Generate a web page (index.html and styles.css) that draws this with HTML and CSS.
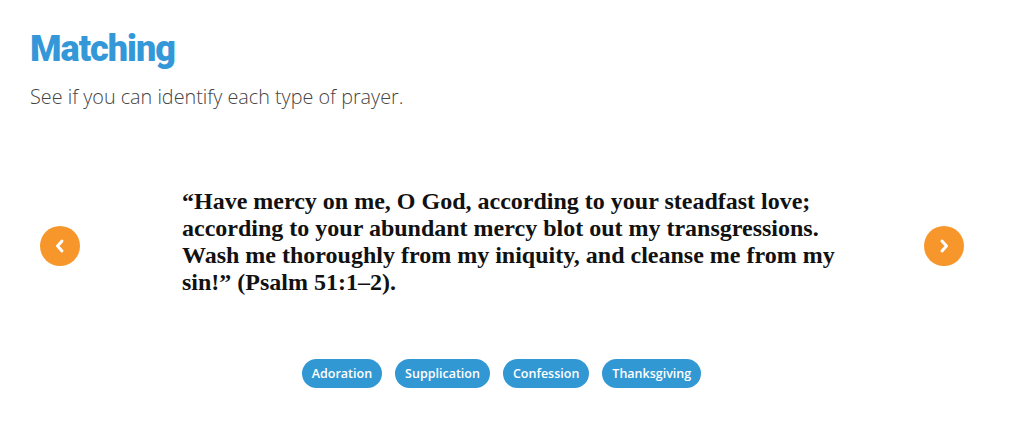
FILE: index.html
```html
<!DOCTYPE html>
<html lang="en">
<head>
  <meta charset="UTF-8">
  <meta name="viewport" content="width=device-width, initial-scale=1.0">
  <title>Matching</title>
  <link rel="stylesheet" href="styles.css">
</head>

<body>
  <div class="header">
    <h1>Matching</h1>
    <p class="intro">See if you can identify each type of prayer.</p>
  </div>

  <div class="carousel">
    <button class="arrow" aria-label="Previous">
      <svg width="14" height="16" viewBox="0 0 14 16"><path d="M9 3 L4.5 8 L9 13" fill="none" stroke="#fff" stroke-width="3" stroke-linecap="round" stroke-linejoin="round"/></svg>
    </button>

    <div class="slide">
      <p class="quote">“Have mercy on me, O God, according to your steadfast love; according to your abundant mercy blot out my transgressions. Wash me thoroughly from my iniquity, and cleanse me from my sin!” (Psalm 51:1–2).</p>
    </div>

    <button class="arrow" aria-label="Next">
      <svg width="14" height="16" viewBox="0 0 14 16"><path d="M5 3 L9.5 8 L5 13" fill="none" stroke="#fff" stroke-width="3" stroke-linecap="round" stroke-linejoin="round"/></svg>
    </button>
  </div>

  <div class="choices">
    <button class="choice">Adoration</button>
    <button class="choice">Supplication</button>
    <button class="choice">Confession</button>
    <button class="choice">Thanksgiving</button>
  </div>
</body>
</html>
```

FILE: styles.css
```css
body {
  margin: 0;
  padding: 0;
  background: #fff;
  font-family: 'Open Sans', sans-serif;
}
.header {
  padding: 27px 30px 0 30px;
}
h1 {
  margin: 0;
  font-family: 'Roboto', sans-serif;
  font-weight: 900;
  font-size: 36px;
  line-height: 44px;
  color: #3498d8;
  letter-spacing: -1px;
}
.intro {
  margin: 12px 0 0 0;
  font-family: 'Open Sans', sans-serif;
  font-weight: 300;
  font-size: 19.8px;
  color: #444;
}
.carousel {
  display: flex;
  align-items: center;
  padding: 0 47px 0 40px;
  margin-top: 78px;
}
.arrow {
  width: 40px;
  height: 40px;
  margin-top: 8px;
  border-radius: 50%;
  border: none;
  background-color: #f7962b;
  display: flex;
  align-items: center;
  justify-content: center;
  padding: 0;
  flex-shrink: 0;
}
.slide {
  flex: 1;
  padding-left: 102px;
}
.quote {
  margin: 0;
  width: 670px;
  font-family: 'Liberation Serif', 'Times New Roman', serif;
  font-weight: bold;
  font-size: 24px;
  line-height: 27px;
  color: #111;
}
.choices {
  display: flex;
  justify-content: center;
  gap: 13px;
  margin-top: 63px;
  padding-right: 8px;
}
.choice {
  height: 29px;
  padding: 0 10px;
  border: none;
  border-radius: 15px;
  background-color: #3298d4;
  color: #fff;
  font-family: 'Open Sans', sans-serif;
  font-weight: 600;
  font-size: 12.5px;
}
```
